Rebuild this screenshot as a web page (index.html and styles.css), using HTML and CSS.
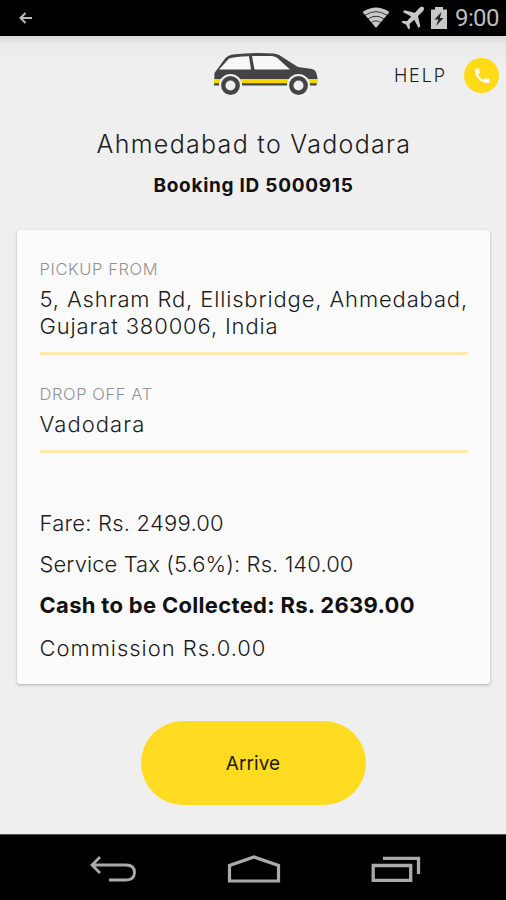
FILE: index.html
```html
<!DOCTYPE html>
<html lang="en">
<head>
<meta charset="utf-8">
<meta name="viewport" content="width=device-width, initial-scale=1">
<title>Booking</title>
<link rel="stylesheet" href="styles.css">
</head>
<body>
<div class="screen">
  <div class="status">
    <svg class="status-back" width="14" height="14" viewBox="0 0 14 14"><path d="M13 7H2M6.500 2L1.500 7l5 5" fill="none" stroke="#bdbdbd" stroke-width="2"/></svg>
    <div class="status-icons">
      <svg class="wifi" width="28" height="22" viewBox="0 0 28 22">
        <path d="M.5 5Q14-4 27.500 5L14 21z" fill="#c8c8c8"/>
        <path d="M3 8.300Q14 1 25 8.300M6 12Q14 6.500 22 12M9 15.700Q14 12 19 15.700" fill="none" stroke="#333" stroke-width="1"/>
      </svg>
      <svg class="plane" width="24" height="24" viewBox="0 0 24 24"><path d="M22.500 1.200c-1.200-1-3-.4-4.200.8L13.800 6.700 3.500 4.200 1.800 6l8.400 4.500-4.300 4.800-4-.6L.5 16.200l4.700 2.500 2.300 4.700L9 21.900l-.5-4 4.800-4.200 4.200 8.300 1.800-1.700-2.300-10.400 4.700-4.500c1.200-1.200 1.800-3 .8-4.200z" fill="#c8c8c8"/></svg>
      <svg class="battery" width="16" height="22" viewBox="0 0 16 22"><path d="M0 2.500h4V0h8v2.500h4V22H0z" fill="#c8c8c8"/><path d="M10.500 5L3.500 12.500h4L5 19l7.500-8H8.800z" fill="#222"/></svg>
      <span class="clock">9:00</span>
    </div>
  </div>

  <div class="app">
    <header class="header">
      <svg class="car" width="106" height="45" viewBox="0 0 106 45">
        <path d="M2 33.500L2.500 21 12 8Q15 3 23 2.300 42 .2 62 1.500q5 .4 9 4L86 15l14 2q4 1 4.500 5l1 4-1 7.500z" fill="#444446"/>
        <path d="M7 17.500L17 6.500q6-2 20-2.300l2 13.300zM40 4h19q5 .3 8 3.500l11 10H42.500z" fill="#f7f7f7"/>
        <path d="M2 27h103.500v4.300H2z" fill="#f5d800"/>
        <g fill="#444446" stroke="#f0f0f0" stroke-width="2.200"><circle cx="18.500" cy="33.500" r="10.500"/><circle cx="86.500" cy="33.500" r="10.500"/></g>
        <g fill="#efefef"><circle cx="18.500" cy="33.500" r="5"/><circle cx="86.500" cy="33.500" r="5"/></g>
      </svg>
      <div class="help">
        <span class="help-text">HELP</span>
        <span class="call"><svg width="16" height="16" viewBox="0 0 16 16"><path d="M1.800.8L4.500.5q.7 0 .8.7l.5 3q0 .5-.3.900L3.900 6.600q1.700 3.400 5.400 5.500l1.600-1.600q.4-.3.900-.3l3 .5q.7.100.7.800v2.700q0 .8-.9.900Q9 15.300 4.900 11.300.8 7.200.9 1.700 1 .9 1.800.8z" fill="#fff"/></svg></span>
      </div>
    </header>

    <h1 class="title">Ahmedabad to Vadodara</h1>
    <p class="booking">Booking ID 5000915</p>

    <main class="card">
      <section class="field">
        <div class="label">PICKUP FROM</div>
        <div class="value">5, Ashram Rd, Ellisbridge, Ahmedabad,<br>Gujarat 380006, India</div>
      </section>
      <section class="field">
        <div class="label">DROP OFF AT</div>
        <div class="value city">Vadodara</div>
      </section>
      <div class="fares">
        <div class="fare">Fare: Rs. 2499.00</div>
        <div class="tax">Service Tax (5.6%): Rs. 140.00</div>
        <div class="cash">Cash to be Collected: Rs. 2639.00</div>
        <div class="commission">Commission Rs.0.00</div>
      </div>
    </main>

    <button class="arrive" type="button">Arrive</button>
  </div>

  <nav class="nav">
    <svg width="48" height="28" viewBox="0 0 48 28"><path d="M11 2L3 10l8 8M3 10h34q8.500 0 8.500 7.500T37 25H20" fill="none" stroke="#aaa" stroke-width="2.800"/></svg>
    <svg width="54" height="30" viewBox="0 0 54 30"><path d="M2.500 27V11.500L27 3l24.500 8.500V27z" fill="none" stroke="#aaa" stroke-width="3.200"/></svg>
    <svg width="50" height="28" viewBox="0 0 50 28"><path d="M2.200 10.500h37.500v14.800H2.200z" fill="none" stroke="#aaa" stroke-width="3.300"/><path d="M12 3.300h35.500V19" fill="none" stroke="#aaa" stroke-width="3.300"/></svg>
  </nav>
</div>
</body>
</html>
```

FILE: styles.css
```css
* { box-sizing: border-box; }
body {
  margin: 0;
  background: #000;
  color: #1c1c1c;
  font-family: Inter, "Liberation Sans", sans-serif;
}
.screen { width: 506px; height: 900px; display: flex; flex-direction: column; overflow: hidden; }
.status { height: 36px; flex: none; display: flex; justify-content: space-between; align-items: center; padding: 0 7px 0 19px; background: #000; }
.status-back { display: block; }
.status-icons { display: flex; align-items: center; }
.wifi { margin-right: 11px; }
.plane { margin-right: 6px; }
.battery { margin-right: 8px; }
.clock { font: 400 24px/36px Roboto, sans-serif; color: #bdbdbd; width: 44px; letter-spacing: -0.6px; white-space: nowrap; }
.app {
  height: 798px;
  flex: none;
  display: flex;
  flex-direction: column;
  align-items: center;
  background: linear-gradient(#d9d9d9, #eaeaea 8px, #efefef 30px);
}
.header { width: 100%; height: 76px; display: flex; justify-content: space-between; align-items: flex-start; padding: 16px 7px 0 212px; }
.car { display: block; }
.help { display: flex; align-items: center; height: 47px; gap: 18px; }
.help-text { font-size: 18px; line-height: 24px; font-weight: 300; letter-spacing: 1.9px; margin-right: -1px; }
.call { width: 35px; height: 35px; flex: none; border-radius: 50%; background: #ffdb17; display: flex; align-items: center; justify-content: center; }
.title { margin: 16px 0 0; padding-left: 2px; font-size: 25px; line-height: 32px; font-weight: 300; letter-spacing: 1.3px; white-space: nowrap; }
.booking { margin: 14px 0 0; padding-left: 1px; font-size: 19px; line-height: 24px; font-weight: 700; color: #111; letter-spacing: 0.72px; white-space: nowrap; }
.card {
  width: 473px;
  height: 454px;
  margin-top: 32px;
  padding: 28px 22px 0 23px;
  background: #fbfbfb;
  border-radius: 3px;
  box-shadow: 0 1px 3px rgba(0, 0, 0, 0.28);
  white-space: nowrap;
}
.field { border-bottom: 3px solid #ffe9ae; margin-bottom: 28px; }
.label { font-size: 16.5px; line-height: 22px; font-weight: 300; color: #929292; letter-spacing: 0.6px; }
.value { font-size: 22px; line-height: 27px; font-weight: 300; padding: 6px 0 12px; letter-spacing: 0.86px; }
.city { letter-spacing: 1.05px; }
.fares { margin-top: 56px; font-size: 22px; line-height: 28px; font-weight: 300; }
.fare { letter-spacing: 0.22px; }
.tax { margin-top: 13px; letter-spacing: 0.08px; }
.cash { margin-top: 13px; font-weight: 700; color: #111; letter-spacing: 0.31px; }
.commission { margin-top: 15px; letter-spacing: 0.97px; }
.arrive {
  width: 225px;
  height: 84px;
  margin: 37px 0 0;
  padding: 2px 0 0;
  border: 0;
  border-radius: 42px;
  background: #ffdc22;
  color: #1c1a08;
  font: 400 19px/24px Inter, sans-serif;
  letter-spacing: 0.1px;
}
.nav { flex: 1; display: flex; justify-content: space-between; align-items: center; padding: 3px 85px 0 89px; background: #000; border-top: 1px solid #555; }
```
